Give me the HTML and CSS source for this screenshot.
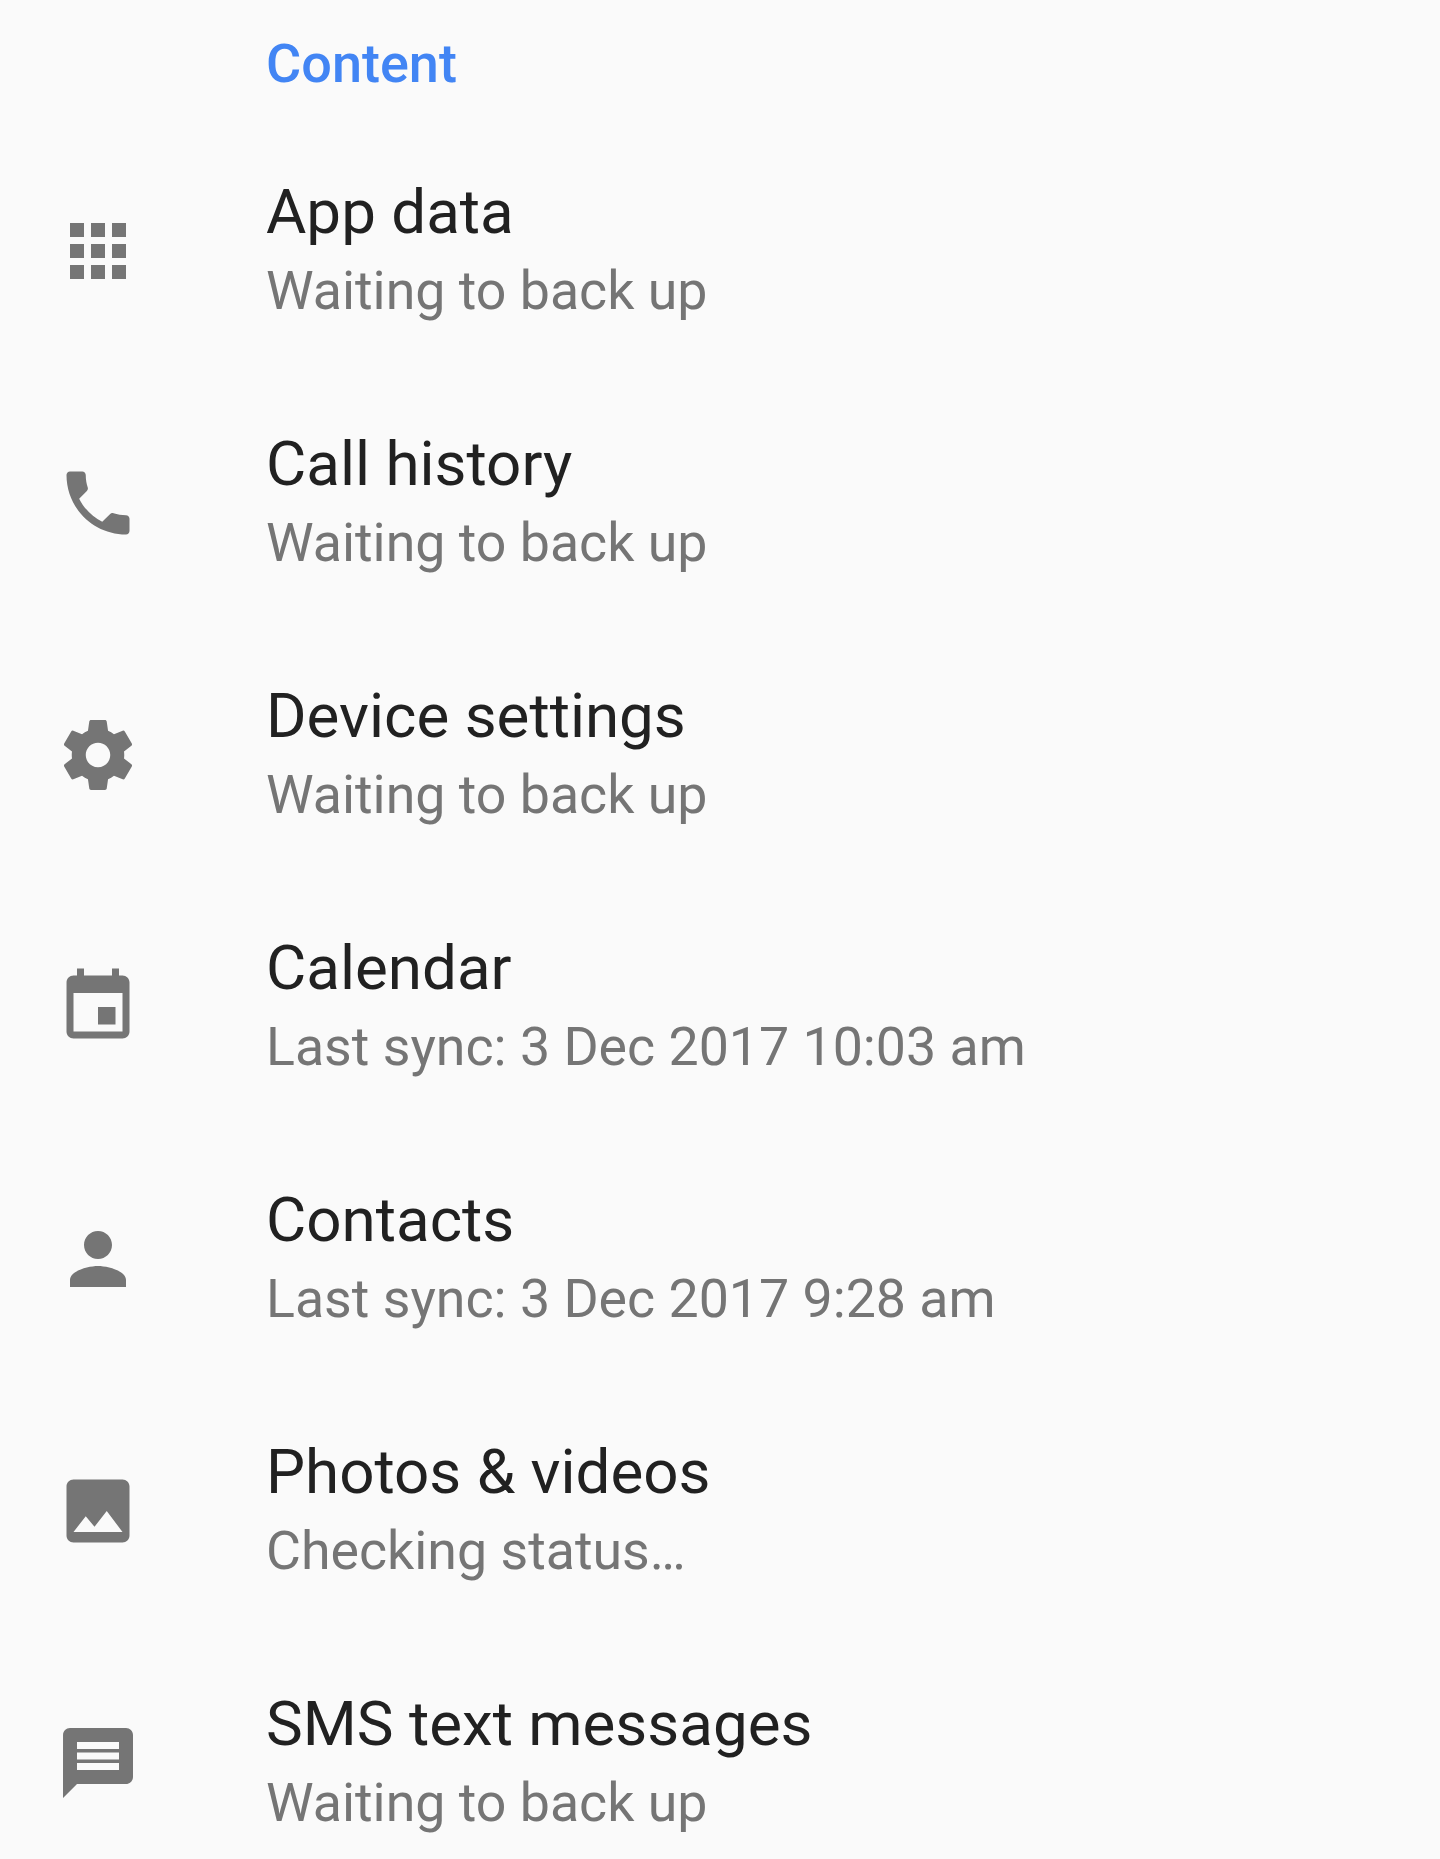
FILE: index.html
```html
<!DOCTYPE html>
<html lang="en">

<head>
    <meta charset="UTF-8">
    <title>Backup content</title>
    <link rel="stylesheet" href="styles.css">
</head>

<body>
    <h2 class="section-title">Content</h2>
    <ul class="item-list">
        <li class="item">
            <svg class="item-icon" viewBox="0 0 24 24"><path d="M4 8h4V4H4v4zm6 12h4v-4h-4v4zm-6 0h4v-4H4v4zm0-6h4v-4H4v4zm6 0h4v-4h-4v4zm6-10v4h4V4h-4zm-6 4h4V4h-4v4zm6 6h4v-4h-4v4zm0 6h4v-4h-4v4z"/></svg>
            <div class="item-text">
                <div class="item-title">App data</div>
                <div class="item-status">Waiting to back up</div>
            </div>
        </li>
        <li class="item">
            <svg class="item-icon" viewBox="0 0 24 24"><path d="M6.62 10.79c1.44 2.83 3.76 5.14 6.59 6.59l2.2-2.2c.27-.27.67-.36 1.02-.24 1.12.37 2.33.57 3.57.57.55 0 1 .45 1 1V20c0 .55-.45 1-1 1-9.39 0-17-7.61-17-17 0-.55.45-1 1-1h3.5c.55 0 1 .45 1 1 0 1.25.2 2.45.57 3.57.11.35.03.74-.25 1.02l-2.2 2.2z"/></svg>
            <div class="item-text">
                <div class="item-title">Call history</div>
                <div class="item-status">Waiting to back up</div>
            </div>
        </li>
        <li class="item">
            <svg class="item-icon" viewBox="0 0 24 24"><path d="M19.43 12.98c.04-.32.07-.64.07-.98s-.03-.66-.07-.98l2.11-1.65c.19-.15.24-.42.12-.64l-2-3.46c-.12-.22-.39-.3-.61-.22l-2.49 1c-.52-.4-1.08-.73-1.69-.98l-.38-2.65C14.46 2.18 14.25 2 14 2h-4c-.25 0-.46.18-.49.42l-.38 2.65c-.61.25-1.17.59-1.69.98l-2.49-1c-.23-.09-.49 0-.61.22l-2 3.46c-.13.22-.07.49.12.64l2.11 1.65c-.04.32-.07.65-.07.98s.03.66.07.98l-2.11 1.65c-.19.15-.24.42-.12.64l2 3.46c.12.22.39.3.61.22l2.49-1c.52.4 1.08.73 1.69.98l.38 2.65c.03.24.24.42.49.42h4c.25 0 .46-.18.49-.42l.38-2.65c.61-.25 1.17-.59 1.69-.98l2.49 1c.23.09.49 0 .61-.22l2-3.46c.12-.22.07-.49-.12-.64l-2.11-1.65zM12 15.5c-1.93 0-3.5-1.57-3.5-3.5s1.57-3.5 3.5-3.5 3.5 1.57 3.5 3.5-1.57 3.5-3.5 3.5z"/></svg>
            <div class="item-text">
                <div class="item-title">Device settings</div>
                <div class="item-status">Waiting to back up</div>
            </div>
        </li>
        <li class="item">
            <svg class="item-icon" viewBox="0 0 24 24"><path d="M17 12h-5v5h5v-5zM16 1v2H8V1H6v2H5c-1.11 0-1.99.9-1.99 2L3 19c0 1.1.89 2 2 2h14c1.1 0 2-.9 2-2V5c0-1.1-.9-2-2-2h-1V1h-2zm3 18H5V8h14v11z"/></svg>
            <div class="item-text">
                <div class="item-title">Calendar</div>
                <div class="item-status">Last sync: 3 Dec 2017 10:03 am</div>
            </div>
        </li>
        <li class="item">
            <svg class="item-icon" viewBox="0 0 24 24"><path d="M12 12c2.21 0 4-1.79 4-4s-1.79-4-4-4-4 1.79-4 4 1.79 4 4 4zm0 2c-2.67 0-8 1.34-8 4v2h16v-2c0-2.66-5.33-4-8-4z"/></svg>
            <div class="item-text">
                <div class="item-title">Contacts</div>
                <div class="item-status">Last sync: 3 Dec 2017 9:28 am</div>
            </div>
        </li>
        <li class="item">
            <svg class="item-icon" viewBox="0 0 24 24"><path d="M21 19V5c0-1.1-.9-2-2-2H5c-1.1 0-2 .9-2 2v14c0 1.1.9 2 2 2h14c1.1 0 2-.9 2-2zM8.5 13.5l2.5 3.01L14.5 12l4.5 6H5l3.5-4.5z"/></svg>
            <div class="item-text">
                <div class="item-title">Photos &amp; videos</div>
                <div class="item-status">Checking status…</div>
            </div>
        </li>
        <li class="item">
            <svg class="item-icon" viewBox="0 0 24 24"><path d="M20 2H4c-1.1 0-1.99.9-1.99 2L2 22l4-4h14c1.1 0 2-.9 2-2V4c0-1.1-.9-2-2-2zm-2 12H6v-2h12v2zm0-3H6V9h12v2zm0-3H6V6h12v2z"/></svg>
            <div class="item-text">
                <div class="item-title">SMS text messages</div>
                <div class="item-status">Waiting to back up</div>
            </div>
        </li>
    </ul>
</body>

</html>
```

FILE: styles.css
```css
html, body {
    height: 100%;
    overflow: hidden;
}

body {
    margin: 0;
    background: #fafafa;
    font-family: Roboto, sans-serif;
}

.section-title {
    margin: 0;
    height: 125px;
    padding-left: 266px;
    box-sizing: border-box;
    font-size: 54px;
    line-height: 127px;
    font-weight: 500;
    color: #4285f4;
}

.item-list {
    margin: 0;
    padding: 0;
    list-style: none;
}

.item {
    display: flex;
    align-items: center;
    height: 252px;
    padding-left: 56px;
}

.item-icon {
    width: 84px;
    height: 84px;
    flex-shrink: 0;
    margin-right: 126px;
    fill: #757575;
}

.item-text {
    padding-top: 1px;
}

.item-title {
    font-size: 61.9px;
    line-height: 78px;
    color: #212121;
}

.item-status {
    margin-top: 1px;
    font-size: 53.7px;
    line-height: 78px;
    color: #757575;
}
```
